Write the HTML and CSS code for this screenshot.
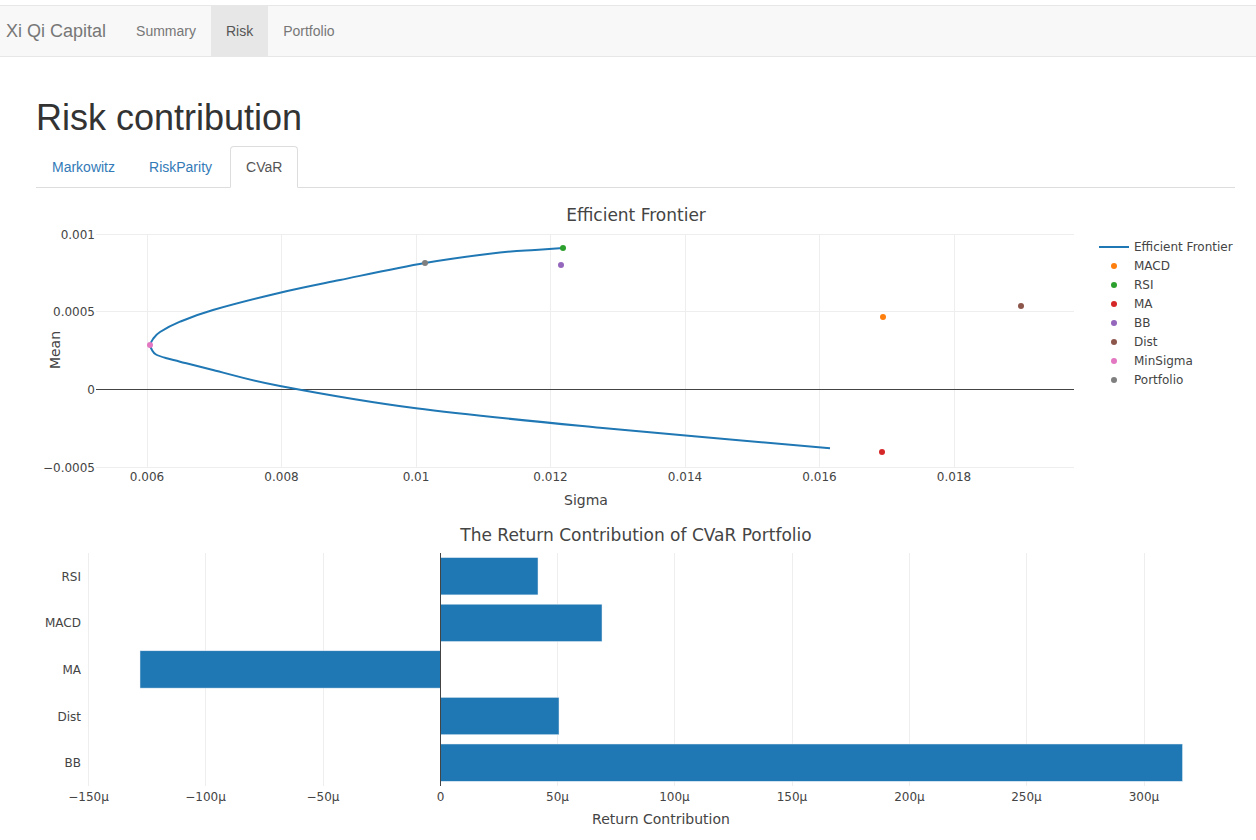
FILE: index.html
```html
<!DOCTYPE html>
<html lang="en">
<head>
<meta charset="utf-8">
<title>Risk contribution</title>
<link rel="stylesheet" href="styles.css">
</head>
<body>
<div class="chrome"></div>
<nav class="navbar">
  <a class="brand" href="#">Xi Qi Capital</a>
  <ul class="nav">
    <li><a href="#">Summary</a></li>
    <li class="active"><a href="#">Risk</a></li>
    <li><a href="#">Portfolio</a></li>
  </ul>
</nav>
<main class="container">
  <h1 class="page-title">Risk contribution</h1>
  <ul class="tabs">
    <li><a href="#">Markowitz</a></li>
    <li><a href="#">RiskParity</a></li>
    <li class="active"><a href="#">CVaR</a></li>
  </ul>

  <div class="chart chart-frontier">
    <svg class="plot" width="1199" height="330" viewBox="0 0 1199 330">
      <g class="grid">
        <line x1="111.5" y1="46" x2="111.5" y2="279"/>
        <line x1="245.5" y1="46" x2="245.5" y2="279"/>
        <line x1="380.5" y1="46" x2="380.5" y2="279"/>
        <line x1="514.5" y1="46" x2="514.5" y2="279"/>
        <line x1="649.5" y1="46" x2="649.5" y2="279"/>
        <line x1="783.5" y1="46" x2="783.5" y2="279"/>
        <line x1="918.5" y1="46" x2="918.5" y2="279"/>
        <line x1="60" y1="46.5" x2="1038" y2="46.5"/>
        <line x1="60" y1="123.5" x2="1038" y2="123.5"/>
        <line x1="60" y1="279.5" x2="1038" y2="279.5"/>
      </g>
      <line class="zero" x1="60" y1="201.5" x2="1038" y2="201.5"/>
      <text class="title" x="600" y="33">Efficient Frontier</text>
      <g class="ytick">
        <text x="59" y="50.5">0.001</text>
        <text x="59" y="127.5">0.0005</text>
        <text x="59" y="205.5">0</text>
        <text x="59" y="283.5">−0.0005</text>
      </g>
      <g class="xtick">
        <text x="111" y="293">0.006</text>
        <text x="245.5" y="293">0.008</text>
        <text x="380" y="293">0.01</text>
        <text x="514.5" y="293">0.012</text>
        <text x="649" y="293">0.014</text>
        <text x="783.5" y="293">0.016</text>
        <text x="918" y="293">0.018</text>
      </g>
      <text class="axis-title" x="550" y="317">Sigma</text>
      <text class="axis-title" x="0" y="0" transform="translate(24 162) rotate(-90)">Mean</text>
      <path class="frontier" d="M527,60 C522.3,60.3 509.5,61.25 499,62 C488.5,62.75 482.3,62.33 464,64.5 C445.7,66.67 415.7,70.42 389,75 C362.3,79.58 328.2,87.05 304,92 C279.8,96.95 265.2,99.7 244,104.7 C222.8,109.7 193.7,117.2 177,122 C160.3,126.8 152.8,130 144,133.7 C135.2,137.4 128.5,141.1 124,144 C119.5,146.9 118.6,148.8 117,151 C115.4,153.2 114.47,155.17 114.3,157 C114.13,158.83 115.05,160.42 116,162 C116.95,163.58 117.55,165.12 120,166.5 C122.45,167.88 126.7,169.1 130.7,170.3 C134.7,171.5 136.3,171.75 144,173.7 C151.7,175.65 160.3,177.95 177,182 C193.7,186.05 210.2,191.6 244,198 C277.8,204.4 326.7,213.35 380,220.3 C433.3,227.25 495,233.03 564,239.7 C633,246.4 755.7,256.9 794,260.3"/>
      <circle cx="847" cy="129" r="3" fill="#ff7f0e"/>
      <circle cx="527" cy="60" r="3" fill="#2ca02c"/>
      <circle cx="846" cy="264" r="3" fill="#d62728"/>
      <circle cx="525" cy="77" r="3" fill="#9467bd"/>
      <circle cx="985" cy="118" r="3" fill="#8c564b"/>
      <circle cx="114" cy="157" r="3" fill="#e377c2"/>
      <circle cx="389" cy="75" r="3" fill="#7f7f7f"/>
      <g class="legend">
        <line x1="1063" y1="59" x2="1093" y2="59" class="frontier"/>
        <text x="1098" y="63">Efficient Frontier</text>
        <circle cx="1078" cy="78" r="3" fill="#ff7f0e"/>
        <text x="1098" y="82">MACD</text>
        <circle cx="1078" cy="97" r="3" fill="#2ca02c"/>
        <text x="1098" y="101">RSI</text>
        <circle cx="1078" cy="116" r="3" fill="#d62728"/>
        <text x="1098" y="120">MA</text>
        <circle cx="1078" cy="135" r="3" fill="#9467bd"/>
        <text x="1098" y="139">BB</text>
        <circle cx="1078" cy="154" r="3" fill="#8c564b"/>
        <text x="1098" y="158">Dist</text>
        <circle cx="1078" cy="173" r="3" fill="#e377c2"/>
        <text x="1098" y="177">MinSigma</text>
        <circle cx="1078" cy="192" r="3" fill="#7f7f7f"/>
        <text x="1098" y="196">Portfolio</text>
      </g>
    </svg>
  </div>

  <div class="chart chart-bars">
    <svg class="plot" width="1199" height="318" viewBox="0 0 1199 318">
      <g class="grid">
        <line x1="52.5" y1="35" x2="52.5" y2="268"/>
        <line x1="169.5" y1="35" x2="169.5" y2="268"/>
        <line x1="287.5" y1="35" x2="287.5" y2="268"/>
        <line x1="521.5" y1="35" x2="521.5" y2="268"/>
        <line x1="638.5" y1="35" x2="638.5" y2="268"/>
        <line x1="756.5" y1="35" x2="756.5" y2="268"/>
        <line x1="873.5" y1="35" x2="873.5" y2="268"/>
        <line x1="990.5" y1="35" x2="990.5" y2="268"/>
        <line x1="1108.5" y1="35" x2="1108.5" y2="268"/>
      </g>
      <g class="bars">
        <rect x="404.5" y="39.6" width="97.5" height="37.3"/>
        <rect x="404.5" y="86.2" width="161.5" height="37.3"/>
        <rect x="104" y="132.8" width="300.5" height="37.3"/>
        <rect x="404.5" y="179.4" width="118.5" height="37.3"/>
        <rect x="404.5" y="226" width="742" height="37.3"/>
      </g>
      <line class="zero" x1="404.5" y1="35" x2="404.5" y2="268"/>
      <text class="title" x="600" y="23">The Return Contribution of CVaR Portfolio</text>
      <g class="ytick">
        <text x="45" y="62.8">RSI</text>
        <text x="45" y="109.4">MACD</text>
        <text x="45" y="156">MA</text>
        <text x="45" y="202.6">Dist</text>
        <text x="45" y="249.2">BB</text>
      </g>
      <g class="xtick">
        <text x="52.5" y="283">−150μ</text>
        <text x="169.5" y="283">−100μ</text>
        <text x="287" y="283">−50μ</text>
        <text x="404.5" y="283">0</text>
        <text x="521.5" y="283">50μ</text>
        <text x="638.5" y="283">100μ</text>
        <text x="756" y="283">150μ</text>
        <text x="873.5" y="283">200μ</text>
        <text x="990.5" y="283">250μ</text>
        <text x="1108" y="283">300μ</text>
      </g>
      <text class="axis-title" x="625" y="306">Return Contribution</text>
    </svg>
  </div>
</main>
</body>
</html>
```

FILE: styles.css
```css
* {
  box-sizing: border-box;
}

html, body {
  margin: 0;
  padding: 0;
  overflow: hidden;
}

body {
  font-family: "Liberation Sans", Arial, Helvetica, sans-serif;
  font-size: 14px;
  line-height: 1.42857;
  color: #333;
  background: #fff;
}

a {
  text-decoration: none;
}

.chrome {
  height: 5px;
  background: #fff;
}

.navbar {
  display: flex;
  align-items: stretch;
  height: 52px;
  background: #f8f8f8;
  border-top: 1px solid #e7e7e7;
  border-bottom: 1px solid #e7e7e7;
}

.brand {
  display: block;
  font-size: 18px;
  line-height: 20px;
  padding: 15px 15px 15px 6px;
  color: #777;
}

.nav {
  display: flex;
  list-style: none;
  margin: 0;
  padding: 0;
}

.nav li a {
  display: block;
  padding: 15px;
  line-height: 20px;
  color: #777;
}

.nav li.active a {
  background: #e7e7e7;
  color: #555;
}

.container {
  padding: 41px 21px 0 36px;
}

.page-title {
  font-size: 36px;
  font-weight: 500;
  line-height: 1.1;
  margin: 0 0 8px;
  color: #333;
}

.tabs {
  display: flex;
  list-style: none;
  margin: 0;
  padding: 0;
  border-bottom: 1px solid #ddd;
}

.tabs li {
  margin-bottom: -1px;
  margin-right: 2px;
}

.tabs li a {
  display: block;
  padding: 10px 15px;
  line-height: 20px;
  border: 1px solid transparent;
  border-radius: 4px 4px 0 0;
  color: #337ab7;
}

.tabs li.active a {
  color: #555;
  background: #fff;
  border-color: #ddd;
  border-bottom-color: #fff;
}

.chart {
  width: 1199px;
}

.chart-frontier {
  height: 330px;
}

.chart-bars {
  height: 318px;
}

.plot {
  display: block;
  font-family: "DejaVu Sans", Verdana, sans-serif;
}

.plot .grid line {
  stroke: #eee;
  stroke-width: 1;
}

.plot .zero {
  stroke: #444;
  stroke-width: 1;
}

.plot text {
  fill: #444;
  font-size: 12px;
}

.plot .title {
  font-size: 17px;
  text-anchor: middle;
}

.plot .axis-title {
  font-size: 14px;
  text-anchor: middle;
}

.plot .ytick text {
  text-anchor: end;
}

.plot .xtick text {
  text-anchor: middle;
}

.plot .frontier {
  fill: none;
  stroke: #1f77b4;
  stroke-width: 2;
  stroke-linejoin: round;
  stroke-linecap: butt;
}

.plot .bars rect {
  fill: #1f77b4;
  stroke: #e5eef6;
  stroke-width: 0.5;
}
```
